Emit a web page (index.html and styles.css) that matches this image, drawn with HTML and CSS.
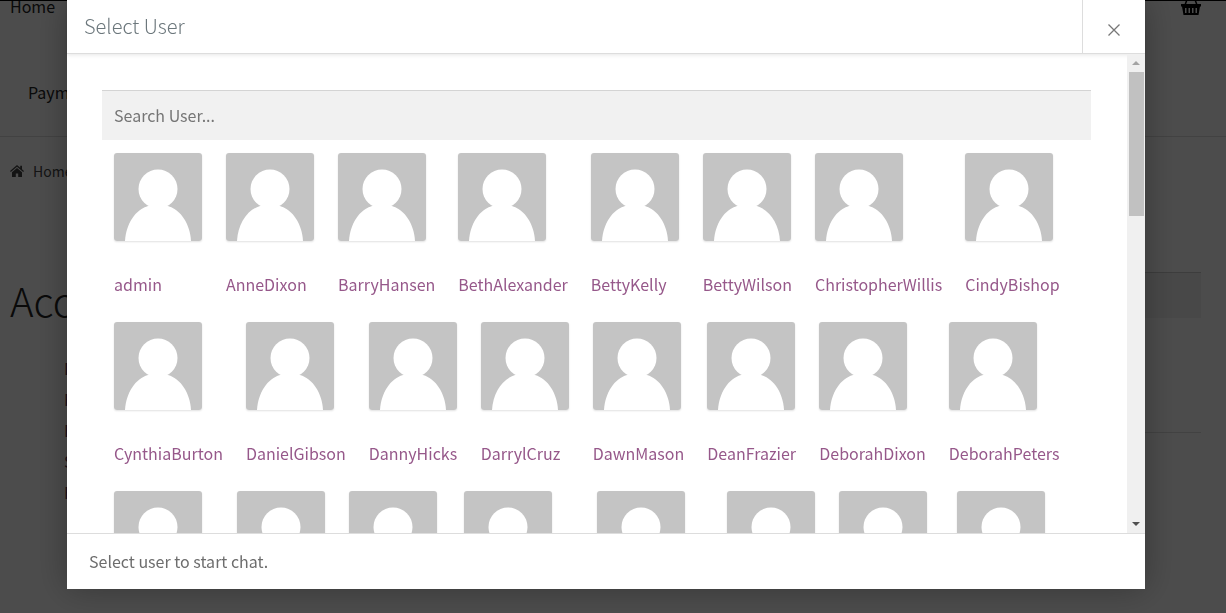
FILE: index.html
```html
<!DOCTYPE html>
<html lang="en">
<head>
<meta charset="UTF-8">
<meta name="viewport" content="width=device-width, initial-scale=1">
<title>Select User</title>
<link rel="stylesheet" href="styles.css">
</head>
<body>

<!-- avatar shape shared by all users -->
<svg width="0" height="0" class="defs">
  <symbol id="avatar" viewBox="0 0 88 88">
    <rect width="88" height="88" fill="#c4c4c4"/>
    <circle cx="44" cy="36" r="19.500" fill="#fff"/>
    <path d="M11 88C12 71 21 57 34 53H54C67 57 76 71 77 88Z" fill="#fff"/>
  </symbol>
</svg>

<div class="page">
  <div class="top-bar">
    <a href="#">Home</a>
    <a href="#" aria-label="Cart">
      <svg class="basket" viewBox="0 0 20 18"><path d="M4 8L7 0M16 8L13 0" stroke="#000" stroke-width="1.500" fill="none"/><path fill="#000" fill-rule="evenodd" d="M0 7h20v2.500h-1L17.500 18h-15L1 9.500H0zM4 11v5h1.500v-5zM7.500 11v5H9v-5zM11 11v5h1.500v-5zM14.500 11v5H16v-5z"/></svg>
    </a>
  </div>
  <nav class="main-nav"><a href="#">Payments</a></nav>
  <div class="breadcrumb">
    <svg class="home-icon" viewBox="0 0 14 12"><path fill="#444" d="M7 0L0 6l.8 1L7 1.800 13.200 7l.8-1-2-1.700V.8h-1.800v2zM7 3L2 7.200V12h3.800V8.500h2.400V12H12V7.200z"/></svg>
    <a href="#">Home</a>
  </div>
  <div class="content">
    <div class="main">
      <h1>Account</h1>
      <ul class="account-nav">
        <li><a href="#">Details</a></li>
        <li><a href="#">Friends</a></li>
        <li><a href="#">Blocked</a></li>
        <li><a href="#">Settings</a></li>
        <li><a href="#">Favourites</a></li>
      </ul>
    </div>
    <div class="sidebar"><div class="sidebar-search"></div></div>
  </div>
</div>

<div class="overlay">
  <div class="modal" role="dialog" aria-labelledby="modalTitle">
    <div class="modal-header">
      <h2 id="modalTitle">Select User</h2>
      <button class="close-button" aria-label="Close">
        <svg viewBox="0 0 12 12"><path d="M0.500 0.500L11.500 11.500M11.500 0.500L0.500 11.500" stroke="#777" stroke-width="1.300"/></svg>
      </button>
    </div>
    <div class="modal-body">
      <div class="modal-content">
        <input type="text" class="search" placeholder="Search User..." aria-label="Search User">
        <ul class="users" id="users"></ul>
      </div>
      <div class="scrollbar">
        <svg class="arrow arrow-up" viewBox="0 0 8 4"><path d="M0 4L4 0L8 4z"/></svg>
        <div class="thumb"></div>
        <svg class="arrow arrow-down" viewBox="0 0 8 4"><path d="M0 0L4 4L8 0z"/></svg>
      </div>
    </div>
    <div class="modal-footer">Select user to start chat.</div>
  </div>
</div>

<script src="script.js"></script>
</body>
</html>
```
FILE: script.js
```js
var users = [
  "admin", "AnneDixon", "BarryHansen", "BethAlexander", "BettyKelly", "BettyWilson", "ChristopherWillis", "CindyBishop",
  "CynthiaBurton", "DanielGibson", "DannyHicks", "DarrylCruz", "DawnMason", "DeanFrazier", "DeborahDixon", "DeborahPeters",
  "DeborahWest", "DebraHill", "DeniseGrant", "DennisHoward", "DianaMarshall", "DianeRay", "DonaldGreer", "DorisCole"
];

var list = document.getElementById("users");

for (var i = 0; i < users.length; i++) {
  var item = document.createElement("li");
  item.innerHTML = '<a href="#"><svg class="avatar"><use href="#avatar"/></svg><span>' + users[i] + '</span></a>';
  list.appendChild(item);
}
```
FILE: styles.css
```css
* {
  box-sizing: border-box;
}

body {
  margin: 0;
  height: 100vh;
  overflow: hidden;
  background: #fff;
  color: #6d6d6d;
  font-family: "Source Sans Pro", "Noto Sans CJK SC", sans-serif;
  font-size: 16px;
  line-height: 24px;
}

a {
  color: inherit;
  text-decoration: none;
}

ul {
  list-style: none;
  margin: 0;
  padding: 0;
}

.defs {
  display: block;
}

/* page behind the modal */
.page {
  border-top: 1px solid #000;
}

.top-bar {
  display: flex;
  justify-content: space-between;
  height: 56px;
  margin-top: -7px;
  padding: 0 25px 0 10px;
  color: #222;
}

.basket {
  width: 20px;
  height: 18px;
  margin-top: 3px;
}

.main-nav {
  height: 87px;
  padding: 30px 28px;
  border-bottom: 1px solid #ddd;
  color: #222;
}

.breadcrumb {
  display: flex;
  align-items: center;
  gap: 9px;
  padding: 22px 10px;
  font-size: 14px;
  color: #444;
}

.home-icon {
  width: 14px;
  height: 12px;
}

.content {
  display: flex;
  justify-content: space-between;
  padding: 67px 25px 0 10px;
}

h1 {
  margin: 4px 0 32px;
  font-size: 40px;
  font-weight: 300;
  line-height: 48px;
  color: #222;
}

.account-nav {
  padding-left: 54px;
  color: #5c3a58;
}

.account-nav li {
  height: 31px;
}

.sidebar {
  width: 240px;
  height: 161px;
  border-bottom: 1px solid #ddd;
}

.sidebar-search {
  height: 46px;
  background: #f2f2f2;
  border-top: 1px solid #ccc;
}

/* modal */
.overlay {
  position: fixed;
  inset: 0;
  padding: 0 81px 24px 67px;
  background: rgba(0, 0, 0, 0.7);
}

.modal {
  display: flex;
  flex-direction: column;
  height: 100%;
  background: #fff;
  box-shadow: 0 0 32px rgba(0, 0, 0, 0.3);
}

.modal-header {
  display: flex;
  justify-content: space-between;
  height: 54px;
  flex-shrink: 0;
  border-bottom: 1px solid #ddd;
  box-shadow: 0 1px 4px rgba(0, 0, 0, 0.1);
}

.modal-header h2 {
  margin: 0;
  padding: 14px 17px;
  font-size: 20px;
  font-weight: 300;
  line-height: 24px;
  color: #6c777c;
}

.close-button {
  width: 63px;
  padding: 10px 0 0;
  border: none;
  border-left: 1px solid #ddd;
  background: none;
  cursor: pointer;
}

.close-button svg {
  width: 12px;
  height: 12px;
}

.modal-body {
  display: flex;
  flex: 1;
  min-height: 0;
}

.modal-content {
  flex: 1;
  padding: 36px 36px 0 35px;
  overflow: hidden;
}

.search {
  display: block;
  width: 100%;
  height: 50px;
  padding: 0 12px 2px;
  border: none;
  border-top: 1px solid #d4d4d4;
  background: #f1f1f1;
  font: inherit;
  color: #6d6d6d;
}

.search::placeholder {
  color: #757575;
}

.users {
  display: flex;
  flex-wrap: wrap;
  column-gap: 23px;
  padding: 13px 12px;
}

.users li {
  min-width: 89px;
  height: 169px;
  color: #96588a;
}

.avatar {
  display: block;
  width: 88px;
  height: 88px;
  margin-bottom: 31px;
  border-radius: 3px;
  box-shadow: 0 1px 2px rgba(0, 0, 0, 0.12);
}

.users span {
  display: block;
}

.scrollbar {
  display: flex;
  flex-direction: column;
  align-items: center;
  width: 18px;
  background: #f0f0f0;
}

.arrow {
  width: 8px;
  height: 4px;
  margin: 7px 0;
  fill: #505050;
}

.arrow-up {
  fill: #a3a3a3;
}

.arrow-down {
  margin-top: auto;
}

.thumb {
  width: 15px;
  height: 144px;
  background: #c1c1c1;
}

.modal-footer {
  height: 56px;
  flex-shrink: 0;
  padding: 15px 22px;
  border-top: 1px solid #ddd;
}
```
